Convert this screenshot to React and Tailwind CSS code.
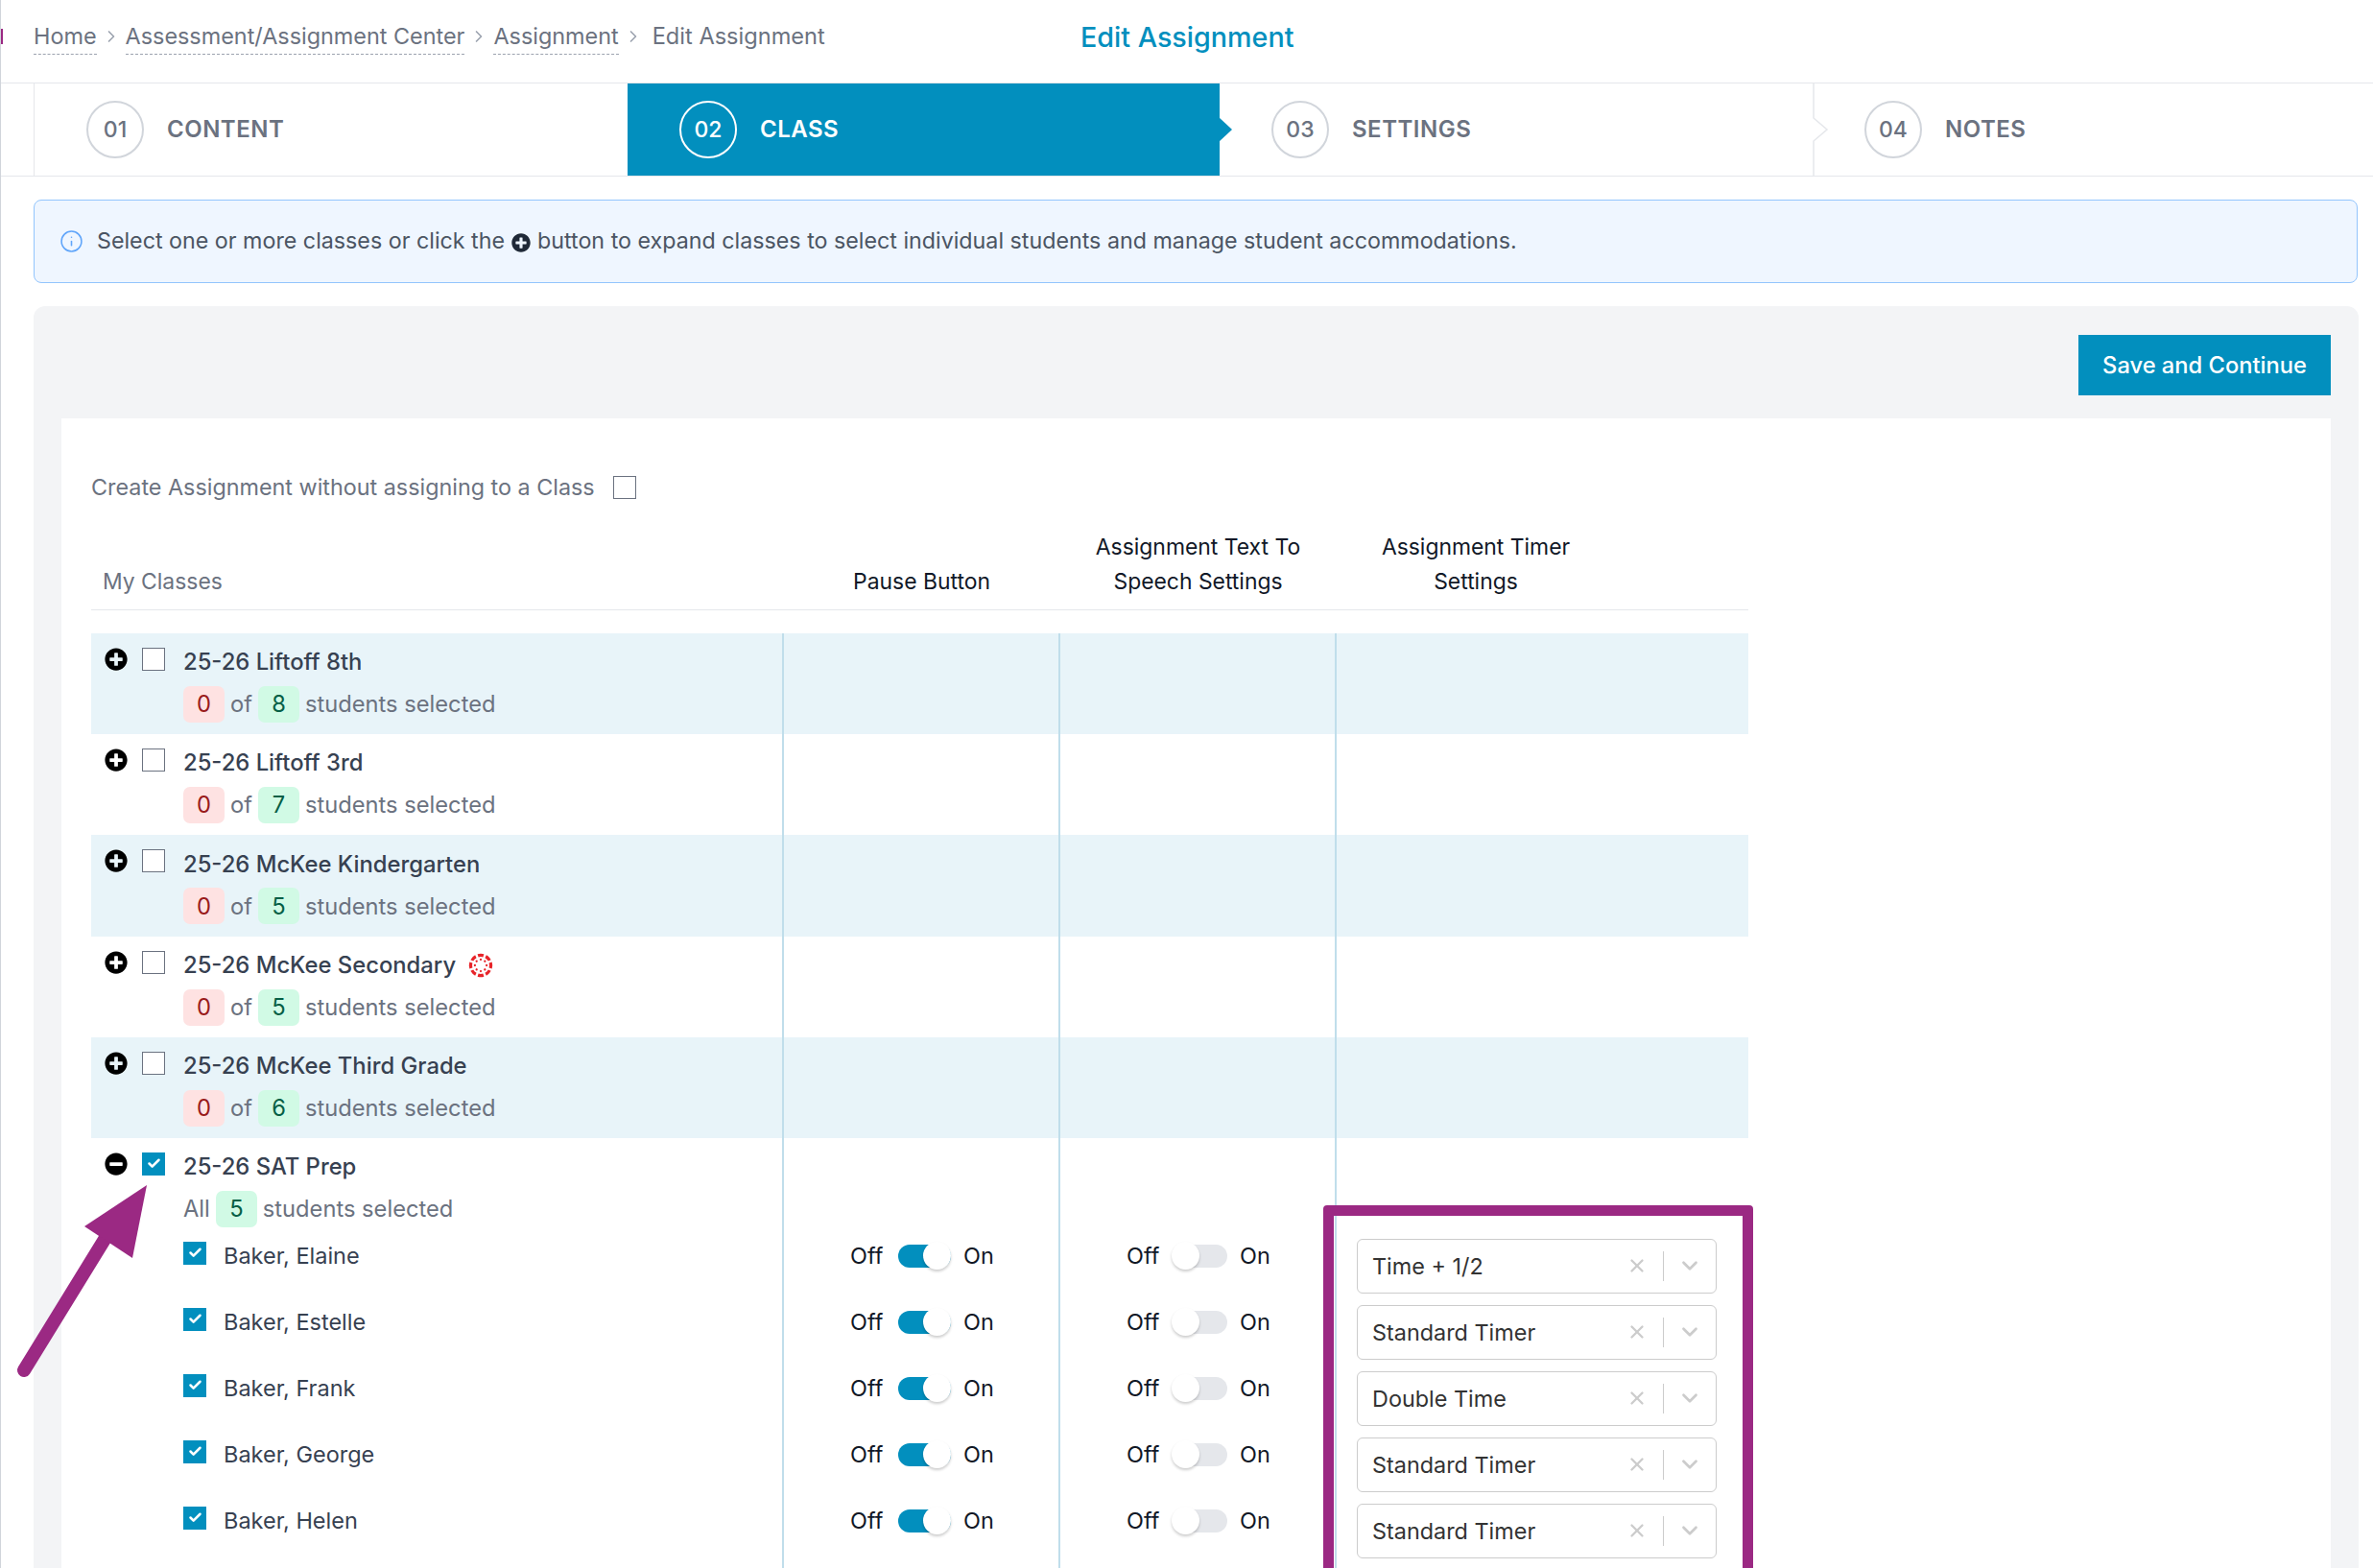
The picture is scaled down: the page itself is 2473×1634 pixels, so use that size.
import React from 'react';
import { ChevronRight, ChevronDown, Info, X, Check } from 'lucide-react';
import { FaPlusCircle, FaMinusCircle } from 'react-icons/fa';

const classes = [
  { name: '25-26 Liftoff 8th', total: 8 },
  { name: '25-26 Liftoff 3rd', total: 7 },
  { name: '25-26 McKee Kindergarten', total: 5 },
  { name: '25-26 McKee Secondary', total: 5, canvas: true },
  { name: '25-26 McKee Third Grade', total: 6 },
];

const students = [
  { name: 'Baker, Elaine', timer: 'Time + 1/2' },
  { name: 'Baker, Estelle', timer: 'Standard Timer' },
  { name: 'Baker, Frank', timer: 'Double Time' },
  { name: 'Baker, George', timer: 'Standard Timer' },
  { name: 'Baker, Helen', timer: 'Standard Timer' },
];

function CanvasLogo() {
  const angles = [0, 45, 90, 135, 180, 225, 270, 315];
  return (
    <svg viewBox="0 0 26 26" className="w-[26px] h-[26px] ml-[13px]">
      {angles.map(a => (
        <g key={a} transform={`rotate(${a} 13 13)`}>
          <path d="M9.6 1.3 A12 12 0 0 1 16.4 1.3 L15.4 4.4 A9 9 0 0 0 10.6 4.4 Z" fill="#e72429" />
          <circle cx="13" cy="6.9" r="1.15" fill="#e72429" />
        </g>
      ))}
    </svg>
  );
}

function Checkbox({ checked }) {
  if (checked) {
    return (
      <div className="w-6 h-6 bg-[#028fbe] flex items-center justify-center shrink-0">
        <Check size={15} strokeWidth={4} className="text-white" />
      </div>
    );
  }
  return <div className="w-6 h-6 bg-white border-[1.5px] border-[#6b7280] shrink-0" />;
}

function Badge({ color, children }) {
  const cls = color === 'red' ? 'bg-[#fee2e2] text-[#991b1b]' : 'bg-[#d1fae5] text-[#065f46]';
  return <span className={`w-[43px] h-[38px] rounded-[7px] flex items-center justify-center ${cls}`}>{children}</span>;
}

function Step({ num, label, width, pad, active }) {
  return (
    <div className={`h-full flex items-center shrink-0 ${width} ${pad} ${active ? 'bg-[#028fbe] text-white' : 'text-[#6b7280]'}`}>
      <div className={`w-[60px] h-[60px] rounded-full border-[2.5px] flex items-center justify-center text-[23px] font-medium ${active ? 'border-white' : 'border-[#d1d5db]'}`}>
        {num}
      </div>
      <div className="ml-[24px] text-[24px] font-semibold tracking-[0.5px]">{label}</div>
    </div>
  );
}

function Toggle({ on }) {
  return (
    <div className="flex items-center h-9 pl-[69px] text-[23.4px] text-[#111827]">
      <span className="w-[50px]">Off</span>
      <div className={`relative w-[55px] h-6 rounded-full ${on ? 'bg-[#028fbe]' : 'bg-[#e5e7eb]'}`}>
        <div className={`absolute top-[-3px] w-[29px] h-[29px] rounded-full bg-white shadow-[0_2px_3px_rgba(0,0,0,0.2)] ${on ? 'right-0' : 'left-[-3px]'}`} />
      </div>
      <span className="ml-[13px]">On</span>
    </div>
  );
}

function TimerSelect({ value }) {
  return (
    <div className="w-[375px] h-[57px] rounded-[6px] border-[1.5px] border-[#cccccc] bg-white flex items-center pl-[15px] text-[23.4px] text-[#333333]">
      <span className="flex-1">{value}</span>
      <X size={22} strokeWidth={2.5} className="text-[#cccccc]" />
      <div className="w-px h-[31px] bg-[#cccccc] ml-[16px]" />
      <ChevronDown size={26} strokeWidth={2.5} className="text-[#cccccc] ml-[14px] mr-[14px]" />
    </div>
  );
}

const lineCell = 'border-l-2 border-[#c0deeb]';
const tableCols = 'grid grid-cols-[720px_288px_288px_431px]';

export default function App() {
  return (
    <div className="relative w-[2473px] h-[1634px] overflow-hidden bg-white border-l border-[#d1d5db] font-['Inter',sans-serif]">
      <div className="absolute left-0 top-[30px] w-[2px] h-[16px] bg-[#9b2983]" />

      {/* breadcrumb */}
      <div className="h-[87px] border-b-[1.5px] border-[#e5e7eb] pt-[20px] pl-[34px] text-[23.4px] text-[#6b7280]">
        <div className="flex items-center h-[37px]">
          <div className="w-[1091px] flex items-center">
            <span className="border-b border-dashed border-[#9ca3af]">Home</span>
            <ChevronRight size={20} className="mx-[5px] text-[#9ca3af]" />
            <span className="border-b border-dashed border-[#9ca3af]">Assessment/Assignment Center</span>
            <ChevronRight size={20} className="mx-[5px] text-[#9ca3af]" />
            <span className="border-b border-dashed border-[#9ca3af]">Assignment</span>
            <ChevronRight size={20} className="ml-[5px] mr-[10px] text-[#9ca3af]" />
            <span className="pb-px text-[23.6px]">Edit Assignment</span>
          </div>
          <div className="text-[28.7px] font-medium text-[#028fbe]">Edit Assignment</div>
        </div>
      </div>

      {/* steps */}
      <div className="relative h-[97px] border-b-[1.5px] border-[#e5e7eb] pl-[34px] flex">
        <div className="flex h-full border-l border-[#e5e7eb]">
          <Step num="01" label="CONTENT" width="w-[618px]" pad="pl-[54px]" />
          <Step num="02" label="CLASS" width="w-[617px]" pad="pl-[54px]" active />
          <Step num="03" label="SETTINGS" width="w-[620px]" pad="pl-[54px]" />
          <Step num="04" label="NOTES" width="w-[580px]" pad="pl-[52px]" />
        </div>
        <svg className="absolute left-[1269px] top-[35px]" width="16" height="26" viewBox="0 0 16 26">
          <path d="M0 0 L14 13 L0 26 Z" fill="#028fbe" />
        </svg>
        <svg className="absolute left-[1888px] top-0" width="20" height="96" viewBox="0 0 20 96">
          <path d="M1 0 V36 L15 48 L1 60 V96" fill="none" stroke="#e5e7eb" strokeWidth="1.5" />
        </svg>
      </div>

      {/* info box */}
      <div className="ml-[34px] mt-[24px] w-[2422px] h-[87px] rounded-[8px] border-[1.5px] border-[#93c5fd] bg-[#eff6ff] flex items-center pl-[26px] text-[23.25px] text-[#4b5563]">
        <Info size={25} strokeWidth={1.5} className="text-[#60a5fa] mr-[14px]" />
        <span>Select one or more classes or click the</span>
        <FaPlusCircle size={20} className="text-[#1f2937] mx-[7px] mt-[3px]" />
        <span>button to expand classes to select individual students and manage student accommodations.</span>
      </div>

      {/* panel */}
      <div className="ml-[34px] mt-[24px] w-[2423px] h-[1400px] rounded-t-[12px] bg-[#f3f4f6] pt-[30px] pl-[29px]">
        <div className="w-[2365px] flex justify-end">
          <button className="w-[263px] h-[63px] bg-[#028fbe] text-white text-[23.7px] font-medium">Save and Continue</button>
        </div>

        <div className="mt-[24px] w-[2365px] h-[1300px] bg-white pl-[31px]">
          <div className="pt-[54px] flex items-center h-[90px] text-[23.35px] text-[#6b7280]">
            <span>Create Assignment without assigning to a Class</span>
            <div className="ml-[19px] w-6 h-6 border-[1.5px] border-[#6b7280]" />
          </div>

          <div className={`${tableCols} w-[1727px] mt-[26px] h-[84px] border-b-[1.5px] border-[#e5e7eb] text-[22.9px] leading-[36px] text-[#111827] text-center`}>
            <div className="self-end pb-[12px] pl-3 text-left text-[#6b7280]">My Classes</div>
            <div className="self-end pb-[12px] pl-[3px]">Pause Button</div>
            <div className="self-end pb-[12px] pl-[3px]">Assignment Text To<br />Speech Settings</div>
            <div className="self-end pb-[12px] w-[291px] pl-[3px]">Assignment Timer<br />Settings</div>
          </div>

          <div className="w-[1727px] mt-6">
            {classes.map((c, i) => (
              <div key={c.name} className={`${tableCols} h-[105.2px] ${i % 2 === 0 ? 'bg-[#e8f4f9]' : ''}`}>
                <div className="pl-[14px] pt-[15px]">
                  <div className="flex items-start">
                    <FaPlusCircle size={24} className="text-black" />
                    <div className="ml-[15px]"><Checkbox /></div>
                    <div className="ml-[19px] flex items-center h-[30px] text-[23.8px] font-medium text-[#374151]">
                      {c.name}
                      {c.canvas && <CanvasLogo />}
                    </div>
                  </div>
                  <div className="flex items-center mt-[10px] ml-[82px] text-[23.7px] text-[#6b7280]">
                    <Badge color="red">0</Badge>
                    <span className="mx-[6px]">of</span>
                    <Badge color="green">{c.total}</Badge>
                    <span className="ml-[6px]">students selected</span>
                  </div>
                </div>
                <div className={lineCell} />
                <div className={lineCell} />
                <div className={lineCell} />
              </div>
            ))}

            <div className={`${tableCols} h-[100px]`}>
              <div className="pl-[14px] pt-[15px]">
                <div className="flex items-start">
                  <FaMinusCircle size={24} className="text-black" />
                  <div className="ml-[15px]"><Checkbox checked /></div>
                  <div className="ml-[19px] flex items-center h-[30px] text-[23.8px] font-medium text-[#374151]">25-26 SAT Prep</div>
                </div>
                <div className="flex items-center mt-[10px] ml-[82px] text-[23.7px] text-[#6b7280]">
                  <span className="mr-[6px]">All</span>
                  <Badge color="green">5</Badge>
                  <span className="ml-[6px]">students selected</span>
                </div>
              </div>
              <div className={lineCell} />
              <div className={lineCell} />
              <div className={lineCell} />
            </div>

            {students.map(s => (
              <div key={s.name} className={`${tableCols} h-[69px]`}>
                <div className="pl-[96px] pt-2 flex items-start">
                  <Checkbox checked />
                  <span className="ml-[18px] text-[23.5px] text-[#374151] leading-[36px] mt-[-3px]">{s.name}</span>
                </div>
                <div className={`${lineCell} pt-[5px]`}><Toggle on /></div>
                <div className={`${lineCell} pt-[5px]`}><Toggle /></div>
                <div className={`${lineCell} pl-[21px] pt-[5px]`}><TimerSelect value={s.timer} /></div>
              </div>
            ))}

            <div className={`${tableCols} h-[40px]`}>
              <div />
              <div className={lineCell} />
              <div className={lineCell} />
              <div className={lineCell} />
            </div>
          </div>
        </div>
      </div>

      {/* annotation */}
      <div className="absolute left-[1378px] top-[1256px] w-[448px] h-[500px] border-[11.5px] border-[#9b2983] rounded-[4px]" />
      <svg className="absolute left-0 top-[1220px]" width="170" height="225" viewBox="0 1220 170 225">
        <line x1="24" y1="1428" x2="112" y2="1285" stroke="#9b2983" strokeWidth="14" strokeLinecap="round" />
        <path d="M152 1235 L87 1278 L137 1311 Z" fill="#9b2983" />
      </svg>
    </div>
  );
}
